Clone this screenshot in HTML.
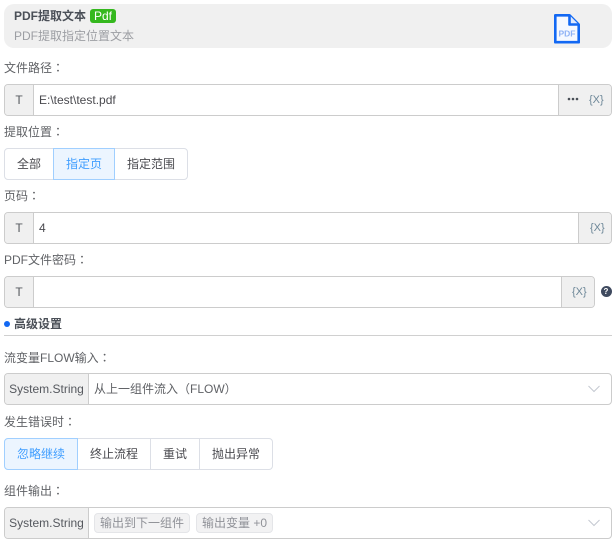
<!DOCTYPE html>
<html><head><meta charset="utf-8">
<style>
*{box-sizing:border-box;margin:0;padding:0}
html,body{width:616px;height:542px;background:#fff;overflow:hidden}
body{position:relative;font-family:"Liberation Sans","Noto Sans CJK SC",sans-serif;font-size:12px;color:#606266}
.a{position:absolute;white-space:nowrap}
.c{font-family:"Noto Sans CJK TC",sans-serif}
.lb{position:absolute;left:4px;height:16px;line-height:16px;white-space:nowrap;color:#606266}
.box{position:absolute;left:4px;height:32px;border:1px solid #ccc;border-radius:4px;background:#fff;overflow:hidden}
.add{position:absolute;top:0;bottom:0;background:#f0f0f0;text-align:center;line-height:30px;color:#55585e}
.add.l{left:0;border-right:1px solid #ccc}
.add.r{right:0;border-left:1px solid #ccc}
.val{position:absolute;top:0;line-height:31px;color:#4a4a4f;white-space:nowrap}
.x{position:absolute;top:0;line-height:31px;font-size:11px;color:#6d8798;white-space:nowrap}
.seg{position:absolute;height:32px;border:1px solid #dcdfe6;background:#fff;text-align:center;line-height:30px;color:#4a4a4f;white-space:nowrap}
.on{background:#ecf5ff;border-color:#a0cfff;color:#409eff;z-index:2}
.tag{position:absolute;top:5px;height:20px;background:#f2f2f3;border:1px solid #e4e5e8;border-radius:4px;color:#909298;text-align:center;line-height:18px;white-space:nowrap}
</style></head><body>
<div class="a" style="left:4px;top:4px;width:608px;height:44px;background:#f0f0f0;border-radius:10px"></div>
<div class="a" style="left:14px;top:8px;line-height:16px;font-weight:bold;color:#4a4f57">PDF提取文本</div>
<div class="a" style="left:90px;top:9px;width:26px;height:14px;background:#35b81e;border-radius:3px;color:#fff;text-align:center;line-height:14px">Pdf</div>
<div class="a" style="left:14px;top:28px;line-height:16px;color:#9c9ea3">PDF提取指定位置文本</div>
<svg class="a" style="left:554px;top:14px" width="26" height="30" viewBox="0 0 26 30">
<path d="M1.300 1.300H15.500L24.700 10.500V28.200H1.300Z" fill="#f6f9ff" stroke="#1268f3" stroke-width="2.600" stroke-linejoin="round"/>
<path d="M15.500 1.300V10.500H24.700" fill="#dfe9fd" stroke="#1268f3" stroke-width="2.600" stroke-linejoin="round"/>
<text x="13" y="22.500" font-family="Liberation Sans" font-size="8.500" font-weight="bold" fill="#8fb2f5" text-anchor="middle">PDF</text>
</svg>

<div class="lb" style="top:60px">文件路径<span class="c">：</span></div>
<div class="box" style="top:84px;width:608px">
<div class="add l" style="width:29px">T</div>
<div class="val" style="left:34px">E:\test\test.pdf</div>
<div class="add r" style="width:53px"></div>
<svg class="a" style="left:562px;top:12px" width="13" height="4"><circle cx="2" cy="2" r="1.300" fill="#4a4f57"/><circle cx="6" cy="2" r="1.300" fill="#4a4f57"/><circle cx="10" cy="2" r="1.300" fill="#4a4f57"/></svg>
<div class="x" style="left:584px">{X}</div>
</div>

<div class="lb" style="top:124px">提取位置<span class="c">：</span></div>
<div class="seg" style="left:4px;top:148px;width:50px;border-radius:4px 0 0 4px">全部</div>
<div class="seg on" style="left:53px;top:148px;width:62px">指定页</div>
<div class="seg" style="left:114px;top:148px;width:74px;border-radius:0 4px 4px 0">指定范围</div>

<div class="lb" style="top:188px">页码<span class="c">：</span></div>
<div class="box" style="top:212px;width:608px">
<div class="add l" style="width:29px">T</div>
<div class="val" style="left:34px">4</div>
<div class="add r" style="width:33px"></div>
<div class="x" style="left:585px">{X}</div>
</div>

<div class="lb" style="top:252px">PDF文件密码<span class="c">：</span></div>
<div class="box" style="top:276px;width:591px">
<div class="add l" style="width:29px">T</div>
<div class="add r" style="width:33px"></div>
<div class="x" style="left:567px">{X}</div>
</div>
<div class="a" style="left:600.500px;top:285.500px;width:11px;height:11px;border-radius:50%;background:#3f4a5f;color:#fff;font-size:8px;font-weight:bold;text-align:center;line-height:11px">?</div>

<div class="a" style="left:4px;top:321px;width:6px;height:6px;border-radius:50%;background:#1268f3"></div>
<div class="a" style="left:14px;top:316px;line-height:16px;font-weight:bold;color:#4a4f57">高级设置</div>
<div class="a" style="left:4px;top:335px;width:608px;height:1px;background:#d0d0d0"></div>

<div class="lb" style="top:350px">流变量FLOW输入<span class="c">：</span></div>
<div class="box" style="top:373px;width:608px">
<div class="add l" style="width:84px">System.String</div>
<div class="val" style="left:89px;color:#606266">从上一组件流入（FLOW）</div>
<svg class="a" style="left:583px;top:11px" width="12" height="8"><path d="M0.500 1L6 6.500L11.500 1" fill="none" stroke="#c4c8d0" stroke-width="1"/></svg>
</div>

<div class="lb" style="top:414px">发生错误时<span class="c">：</span></div>
<div class="seg on" style="left:4px;top:438px;width:74px;border-radius:4px 0 0 4px">忽略继续</div>
<div class="seg" style="left:77px;top:438px;width:74px">终止流程</div>
<div class="seg" style="left:150px;top:438px;width:50px">重试</div>
<div class="seg" style="left:199px;top:438px;width:74px;border-radius:0 4px 4px 0">抛出异常</div>

<div class="lb" style="top:483px">组件输出<span class="c">：</span></div>
<div class="box" style="top:507px;width:608px">
<div class="add l" style="width:84px">System.String</div>
<div class="tag" style="left:89px;width:96px">输出到下一组件</div>
<div class="tag" style="left:191px;width:77px">输出变量 +0</div>
<svg class="a" style="left:583px;top:11px" width="12" height="8"><path d="M0.500 1L6 6.500L11.500 1" fill="none" stroke="#c4c8d0" stroke-width="1"/></svg>
</div>
</body></html>
